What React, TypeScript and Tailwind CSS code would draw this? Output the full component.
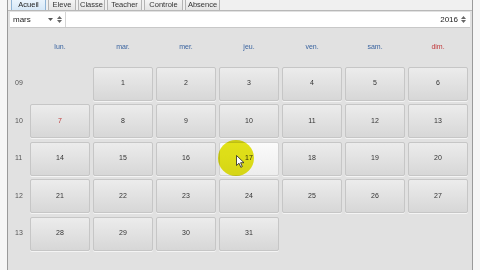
import React from 'react'

const DAY_NAMES = [
  { label: 'lun.', red: false },
  { label: 'mar.', red: false },
  { label: 'mer.', red: false },
  { label: 'jeu.', red: false },
  { label: 'ven.', red: false },
  { label: 'sam.', red: false },
  { label: 'dim.', red: true },
]

const TABS = [
  { label: 'Acueil', w: 'w-[35px]' },
  { label: 'Eleve', w: 'w-[28px]' },
  { label: 'Classe', w: 'w-[27px]' },
  { label: 'Teacher', w: 'w-[35px]' },
  { label: 'Controle', w: 'w-[39px]' },
  { label: 'Absence', w: 'w-[35px]' },
]

// null = empty slot
const WEEKS: { num: string; days: (number | null)[] }[] = [
  { num: '09', days: [null, 1, 2, 3, 4, 5, 6] },
  { num: '10', days: [7, 8, 9, 10, 11, 12, 13] },
  { num: '11', days: [14, 15, 16, 17, 18, 19, 20] },
  { num: '12', days: [21, 22, 23, 24, 25, 26, 27] },
  { num: '13', days: [28, 29, 30, 31, null, null, null] },
]

function Spin() {
  return (
    <span className="flex flex-col items-center leading-none">
      <svg width="5" height="3" viewBox="0 0 5 3"><path d="M0 3 L2.5 0 L5 3 Z" fill="#666" /></svg>
      <svg width="5" height="3" viewBox="0 0 5 3" className="mt-[1px]"><path d="M0 0 L2.5 3 L5 0 Z" fill="#666" /></svg>
    </span>
  )
}

function DayCell({ day }: { day: number | null }) {
  if (day == null) return <div className="h-[34px]" />
  const hover = day === 17
  const red = day === 7
  return (
    <div
      className={`h-[34px] rounded-[2px] border flex items-center justify-center text-[7px] shadow-[0_1px_0_#f4f4f4] ${
        hover
          ? 'bg-gradient-to-b from-[#fbfbfb] to-[#ededed] border-[#d2d2d2]'
          : 'bg-gradient-to-b from-[#ececec] to-[#d7d7d7] border-[#c6c6c6]'
      } ${red ? 'text-[#c03a3a]' : 'text-[#333]'}`}
    >
      {day}
    </div>
  )
}

export default function App() {
  return (
    <div
      className="relative w-[480px] h-[270px] overflow-hidden bg-[#f6f6f6] flex"
      style={{ fontFamily: '"Liberation Sans", Arial, sans-serif' }}
    >
      <div className="ml-[7px] w-[466px] h-full border-l border-r border-[#9a9a9a] flex flex-col bg-[#e1e1e1]">
        {/* Tabs */}
        <div className="h-[11px] flex items-end pl-[3px] gap-[2px] bg-[#f0f0f0] border-b border-[#b8b8b8]">
          {TABS.map((t, i) => (
            <div
              key={t.label}
              className={`${t.w} h-[11px] flex items-center justify-center text-[7.5px] leading-none border border-b-0 ${
                i === 0
                  ? 'bg-gradient-to-b from-[#eaf4fd] to-[#d6e8f8] border-[#8fb4d6] text-[#222]'
                  : 'bg-gradient-to-b from-[#f4f4f4] to-[#e4e4e4] border-[#b4b4b4] text-[#333]'
              }`}
            >
              {t.label}
            </div>
          ))}
        </div>

        {/* Month / year selectors */}
        <div className="h-[16px] flex items-center bg-white border-b border-[#c8c8c8] mx-[2px] mt-[1px]">
          <div className="w-[56px] h-full flex items-center pl-[3px] pr-[3px] border-r border-[#d4d4d4] text-[8px] text-[#222]">
            <span>mars</span>
            <span className="ml-auto mr-[4px]">
              <svg width="5" height="3" viewBox="0 0 5 3"><path d="M0 0 L2.5 3 L5 0 Z" fill="#555" /></svg>
            </span>
            <Spin />
          </div>
          <div className="flex-1 h-full flex items-center justify-end pr-[4px] gap-[3px] text-[8px] text-[#222]">
            <span>2016</span>
            <Spin />
          </div>
        </div>

        {/* Calendar */}
        <div className="grid grid-cols-[18px_repeat(7,60px)] gap-x-[3px] gap-y-[3.5px] pl-[1px]">
          <div className="h-[35px]" />
          {DAY_NAMES.map((d) => (
            <div
              key={d.label}
              className={`h-[35px] pt-[15px] text-center text-[7px] leading-[8px] ${d.red ? 'text-[#c0393b]' : 'text-[#3a64a0]'}`}
            >
              {d.label}
            </div>
          ))}
          {WEEKS.map((w) => (
            <React.Fragment key={w.num}>
              <div className="h-[34px] flex items-center pl-[6px] text-[7px] text-[#555]">{w.num}</div>
              {w.days.map((d, i) => (
                <DayCell key={w.num + '-' + i} day={d} />
              ))}
            </React.Fragment>
          ))}
        </div>
      </div>

      {/* Cursor highlight */}
      <div className="absolute left-[218px] top-[140px] w-[36px] h-[36px] rounded-full bg-[#e6e618] mix-blend-multiply" />
      <svg className="absolute left-[236px] top-[155px]" width="9" height="13" viewBox="0 0 9 13">
        <path d="M0.5 0.5 L0.5 10.5 L3 8.2 L4.8 12.3 L6.3 11.6 L4.6 7.7 L8 7.7 Z" fill="#fff" stroke="#222" strokeWidth="0.8" />
      </svg>
    </div>
  )
}
